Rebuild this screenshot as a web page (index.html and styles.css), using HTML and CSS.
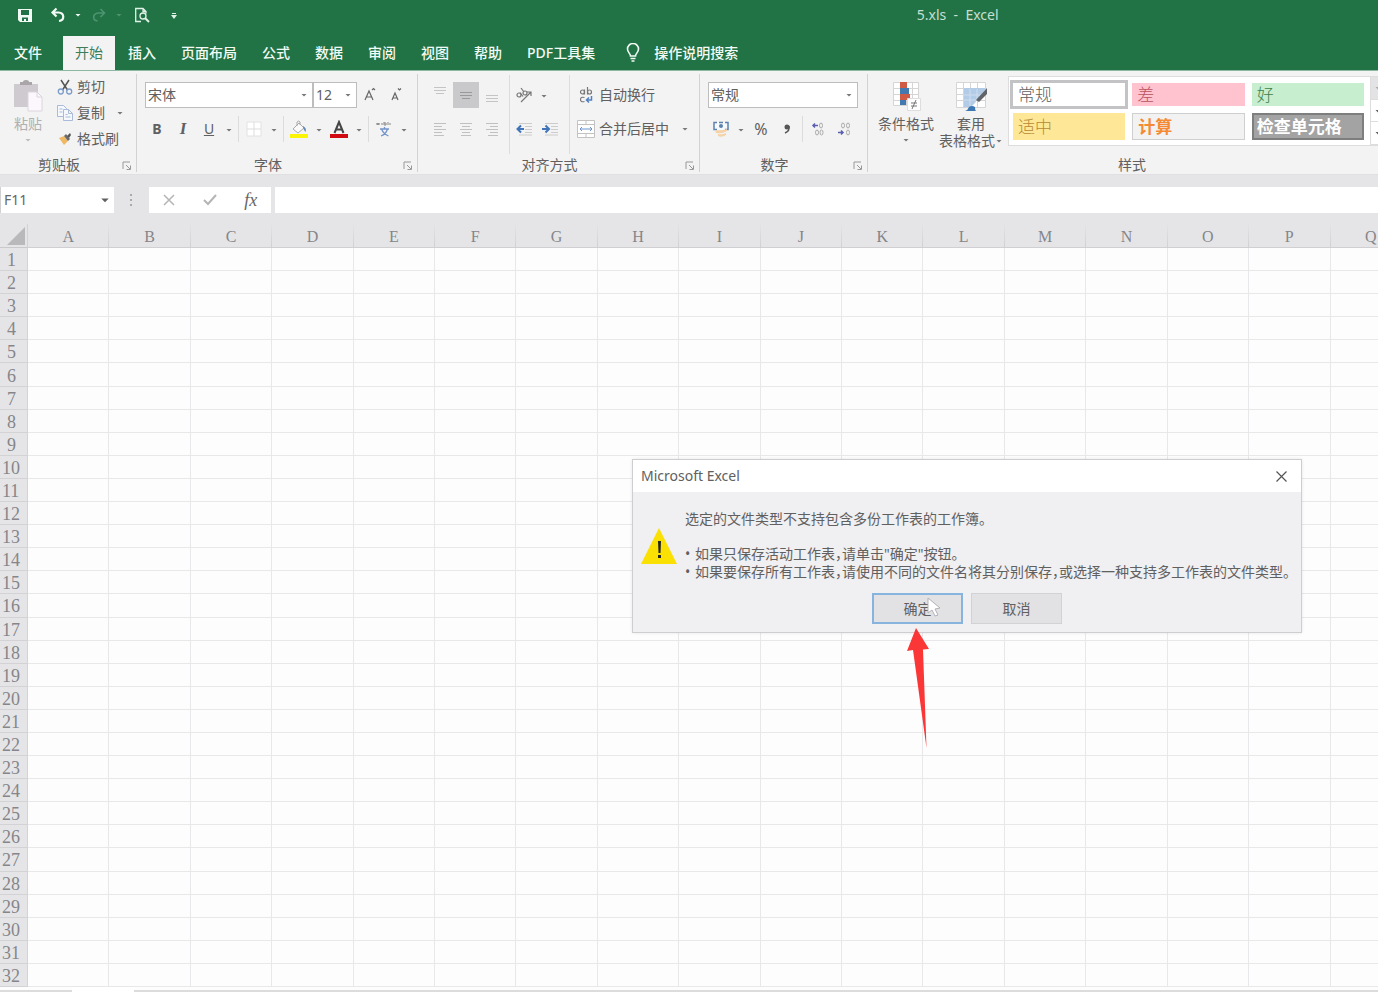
FILE: index.html
```html
<!DOCTYPE html>
<html lang="zh-CN">
<head>
<meta charset="utf-8">
<title>5.xls - Excel</title>
<link rel="stylesheet" href="styles.css">
</head>
<body>
<svg class="sprite" aria-hidden="true">
  <symbol id="caret" viewBox="0 0 8 8"><path d="M1.5 3h5L4 5.5z" fill="currentColor"/></symbol>
  <symbol id="launch" viewBox="0 0 10 10"><path d="M1 8V1h7M4 4l4 4M8.500 4.500v4h-4" fill="none" stroke="currentColor"/></symbol>
</svg>
<header class="top">
  <div class="titlebar">
    <div class="quick">
      <button class="q save" aria-label="保存"><svg width="16" height="16" viewBox="0 0 16 16"><path fill="#f2faf5" fill-rule="evenodd" d="M1 2h14v13H3l-2-2zM4 3v5h8V3zM5 10.500V14h2v-2h2v2h2v-3.500z"/></svg></button>
      <button class="q undo" aria-label="撤消"><svg width="16" height="16" viewBox="0 0 16 16" fill="none" stroke="#f2faf5" stroke-width="2.200"><path d="M6.500 1.500L2.500 5.500l4 4M3 5.500h5.500c6.500.5 6 8 .5 8.500"/></svg></button>
      <button class="q arrow" aria-label="撤消选项"><svg width="8" height="8"><use href="#caret"/></svg></button>
      <button class="q redo" aria-label="恢复"><svg width="16" height="16" viewBox="0 0 16 16" fill="none" stroke="#4d9470" stroke-width="1.600"><path d="M9.500 2L13.500 6l-4 4M13 6H7.500C1 6.500 1.500 13.500 6.500 14"/></svg></button>
      <button class="q arrow dim" aria-label="恢复选项"><svg width="8" height="8"><use href="#caret"/></svg></button>
      <button class="q preview" aria-label="打印预览"><svg width="16" height="16" viewBox="0 0 16 16" fill="none" stroke="#e2f1e8" stroke-width="1.300"><path d="M7 14.500H1.700V1.500H9l3 3v2M9 1.500v3h3"/><circle cx="9" cy="9" r="3"/><path d="M11 11l4 4" stroke-width="2"/></svg></button>
      <button class="q custom" aria-label="自定义快速访问工具栏"><svg width="8" height="10" viewBox="0 0 8 10" fill="#e2f1e8"><path d="M2 3h4v1H2zM1 5h6L4 9z"/></svg></button>
    </div>
    <h1 class="title">5.xls&nbsp; -&nbsp; Excel</h1>
  </div>
  <nav class="tabs">
    <button class="tab file">文件</button>
    <button class="tab active">开始</button>
    <button class="tab">插入</button>
    <button class="tab">页面布局</button>
    <button class="tab">公式</button>
    <button class="tab">数据</button>
    <button class="tab">审阅</button>
    <button class="tab">视图</button>
    <button class="tab">帮助</button>
    <button class="tab">PDF工具集</button>
    <button class="tab tell"><svg width="14" height="20" viewBox="0 0 14 20" fill="none" stroke="#f2faf5" stroke-width="1.600"><path d="M4.500 13c0-2.500-3-3.500-3-7a5.500 5.500 0 0 1 11 0c0 3.500-3 4.500-3 7z"/><path d="M4.500 15.500h5M5.500 18h3"/></svg>操作说明搜索</button>
  </nav>
</header>

<section class="ribbon" aria-label="功能区">
  <div class="group clipboard">
    <div class="body">
      <button class="big paste"><svg width="32" height="32" viewBox="0 0 32 32"><path d="M2 4h24v23H2z" fill="#cfcacf"/><path d="M8 5V2h3a3 2 0 0 1 6 0h3v3z" fill="#a9a5a9"/><path d="M16 12h9l5 5v14H16z" fill="#fbf7fc" stroke="#dcd5de"/><path d="M25 12v5h5" fill="none" stroke="#dcd5de"/></svg><span>粘贴</span><svg class="caret" width="8" height="8"><use href="#caret"/></svg></button>
      <div class="stack">
        <button class="small"><svg width="16" height="16" viewBox="0 0 16 16" fill="none"><path d="M4 1l6.500 10M12 1L5.500 11" stroke="#555" stroke-width="1.500"/><circle cx="3.800" cy="12.500" r="2.500" stroke="#7b9cc9" stroke-width="1.300"/><circle cx="12.200" cy="12.500" r="2.500" stroke="#7b9cc9" stroke-width="1.300"/></svg>剪切</button>
        <button class="small"><svg width="16" height="16" viewBox="0 0 16 16" fill="#f5f8fd" stroke="#a9bbd8"><path d="M.5.5h6l3 3v8h-9z"/><path d="M6.500 4.500h5l4 4v7h-9zM11.500 4.500v4h4M8.500 9.500h2M8.500 12h5M2.500 4h3M2.500 7h3"/></svg>复制<svg class="caret" width="8" height="8"><use href="#caret"/></svg></button>
        <button class="small"><svg width="16" height="16" viewBox="0 0 16 16"><path d="M2 7l5-2 4 5-4 4z" fill="#eeb864"/><path d="M7 5l2-2 4 5-2 2z" fill="#6a6a6a"/><path d="M10 5l3-3 1 2-2 3z" fill="#555"/></svg>格式刷</button>
      </div>
    </div>
    <div class="label"><span>剪贴板</span><button aria-label="剪贴板选项"><svg width="10" height="10"><use href="#launch"/></svg></button></div>
  </div>

  <div class="group font">
    <div class="body rows">
      <div class="row">
        <label class="combo name"><select aria-label="字体"><option>宋体</option></select><svg width="8" height="8"><use href="#caret"/></svg></label><label class="combo size"><select aria-label="字号"><option>12</option></select><svg width="8" height="8"><use href="#caret"/></svg></label>
        <button class="ico" aria-label="增大字号"><svg width="14" height="16" viewBox="0 0 14 16" fill="none" stroke="#666" stroke-width="1.200"><path d="M2 13L6 4l4 9M3.500 10h5"/><path d="M9 3l1.500-1.500L12 3"/></svg></button>
        <button class="ico" aria-label="减小字号"><svg width="14" height="16" viewBox="0 0 14 16" fill="none" stroke="#666" stroke-width="1.200"><path d="M3 13l3-7 3 7M4 11h4"/><path d="M9 1.500L10.500 3 12 1.500"/></svg></button>
      </div>
      <div class="row">
        <button class="ico b">B</button><button class="ico i">I</button><button class="ico u">U</button><button class="drop" aria-label="下划线选项"><svg width="8" height="8"><use href="#caret"/></svg></button>
        <span class="sep"></span>
        <button class="ico" aria-label="边框"><svg width="16" height="16" viewBox="0 0 16 16"><path d="M1 1h14v14H1z" fill="#fff" stroke="#e2e2e2"/><path d="M8 1v14M1 8h14" stroke="#ddd"/></svg></button><button class="drop" aria-label="边框选项"><svg width="8" height="8"><use href="#caret"/></svg></button>
        <span class="sep"></span>
        <button class="ico" aria-label="填充颜色"><svg width="18" height="18" viewBox="0 0 18 18"><path d="M3 9l6-6 5 5-6 5z" fill="#fafafa" stroke="#aaa"/><path d="M7 6V2q1.500-2 3 0v3" fill="none" stroke="#aaa"/><path d="M13 6q4 2 2.500 6Q14 11 13 7z" fill="#5f87b5"/><path d="M0 14h18v4H0z" fill="#fbf406"/></svg></button><button class="drop" aria-label="填充选项"><svg width="8" height="8"><use href="#caret"/></svg></button>
        <button class="ico" aria-label="字体颜色"><svg width="18" height="18" viewBox="0 0 18 18"><path d="M4.500 13L9 2l4.500 11M6 9.500h6" fill="none" stroke="#444" stroke-width="2"/><path d="M0 14h18v4H0z" fill="#d10a12"/></svg></button><button class="drop" aria-label="颜色选项"><svg width="8" height="8"><use href="#caret"/></svg></button>
        <span class="sep"></span>
        <button class="ico" aria-label="拼音指南"><svg width="16" height="16" viewBox="0 0 16 16" fill="none"><path d="M1 4V2l1 2 1-2v2M6 4V2M8 1v3h2V2H8M12 1v3M14 2v2" stroke="#888"/><path d="M4 8h9M8.500 6v2M5 15q5-2 6.500-7M5.500 8q2 5 7 7" stroke="#7394cb" stroke-width="1.300"/></svg></button><button class="drop" aria-label="拼音选项"><svg width="8" height="8"><use href="#caret"/></svg></button>
      </div>
    </div>
    <div class="label"><span>字体</span><button aria-label="字体设置"><svg width="10" height="10"><use href="#launch"/></svg></button></div>
  </div>

  <div class="group align">
    <div class="body">
      <div class="rows">
        <div class="row">
          <button class="ico" aria-label="顶端对齐"><svg width="14" height="16" viewBox="0 0 14 16" stroke="#c4c4c4"><path d="M1 .5h12M1 3.500h12M3 6.500h8"/></svg></button><button class="ico on" aria-label="垂直居中"><svg width="14" height="16" viewBox="0 0 14 16" stroke="#999"><path d="M1 5.500h12M1 8.500h12M3 11.500h8"/></svg></button><button class="ico" aria-label="底端对齐"><svg width="14" height="16" viewBox="0 0 14 16" stroke="#c4c4c4"><path d="M1 8.500h12M1 11.500h12M1 14.500h12"/></svg></button>
        </div>
        <div class="row">
          <button class="ico" aria-label="左对齐"><svg width="14" height="14" viewBox="0 0 14 14" stroke="#c0c0c0"><path d="M1 1.500h12M1 4.500h8M1 7.500h12M1 10.500h8M1 13.500h10"/></svg></button><button class="ico" aria-label="居中"><svg width="14" height="14" viewBox="0 0 14 14" stroke="#c0c0c0"><path d="M1 1.500h12M3 4.500h8M1 7.500h12M3 10.500h8M2 13.500h10"/></svg></button><button class="ico" aria-label="右对齐"><svg width="14" height="14" viewBox="0 0 14 14" stroke="#c0c0c0"><path d="M1 1.500h12M5 4.500h8M1 7.500h12M5 10.500h8M3 13.500h10"/></svg></button>
        </div>
      </div>
      <div class="rows mid">
        <div class="row">
          <button class="ico" aria-label="方向"><svg width="18" height="16" viewBox="0 0 18 16" fill="none" stroke="#777" stroke-width="1.200"><path d="M6 15L16 5M16 9V5h-4"/><circle cx="4" cy="8" r="2"/><path d="M5 5.500l3 4"/><circle cx="10" cy="6" r="2"/><path d="M6 1l3 4"/></svg></button><button class="drop" aria-label="方向选项"><svg width="8" height="8"><use href="#caret"/></svg></button>
        </div>
        <div class="row">
          <button class="ico" aria-label="减少缩进"><svg width="16" height="14" viewBox="0 0 16 14"><path d="M3 1.500h13M9 4.500h7M9 7.500h7M9 10.500h7M3 13h13" stroke="#ccc"/><path d="M8 7H2M5 3.500L1.500 7 5 10.500" fill="none" stroke="#3f74b8" stroke-width="2"/></svg></button><button class="ico" aria-label="增加缩进"><svg width="16" height="14" viewBox="0 0 16 14"><path d="M3 1.500h13M9 4.500h7M9 7.500h7M9 10.500h7M3 13h13" stroke="#ccc"/><path d="M0 7h6M3.500 3.500L7 7l-3.500 3.500" fill="none" stroke="#3f74b8" stroke-width="2"/></svg></button>
        </div>
      </div>
      <div class="rows wrap">
        <div class="row"><button class="small"><svg width="18" height="18" viewBox="0 0 18 18" fill="none" stroke="#777" stroke-width="1.200"><circle cx="5.500" cy="6" r="2"/><path d="M7.500 3.500v5M10.500 1v7.500"/><circle cx="12.500" cy="6" r="2"/><path d="M7.500 11.500q-4-1-4 2t4 2"/><path d="M14.500 10v4H10M12 11.500L9.500 14l2.500 2.500" stroke="#4f80c4" stroke-width="1.500"/></svg>自动换行</button></div>
        <div class="row"><button class="small"><svg width="18" height="18" viewBox="0 0 18 18" fill="#fff" stroke="#c2c2c2"><path d="M.5.5h17v17H.5zM.5 4.500h17M.5 13.500h17M9 .5v4M9 13.500v4"/><path d="M3 9h12M5 7L3 9l2 2M13 7l2 2-2 2" fill="none" stroke="#6d95ca"/></svg>合并后居中<svg class="caret" width="8" height="8"><use href="#caret"/></svg></button></div>
      </div>
    </div>
    <div class="label"><span>对齐方式</span><button aria-label="对齐设置"><svg width="10" height="10"><use href="#launch"/></svg></button></div>
  </div>

  <div class="group number">
    <div class="body rows">
      <div class="row"><label class="combo format"><select aria-label="数字格式"><option>常规</option></select><svg width="8" height="8"><use href="#caret"/></svg></label></div>
      <div class="row">
        <button class="ico" aria-label="会计数字格式"><svg width="18" height="18" viewBox="0 0 18 18"><path d="M2 2.500h14v8H2z" fill="#f7fafc"/><path d="M5 2.500H2v7h3M13 2.500h3v7h-3M7 2.500h4" fill="none" stroke="#5b83ae" stroke-width="1.500"/><circle cx="9" cy="6" r="2" fill="#5b83ae"/><path d="M3 10q6 1 12-1v2q-5 3-11 2zM6 14q4 1 8-1v2q-4 3-8 1z" fill="#f5d2a8"/></svg></button><button class="drop" aria-label="会计选项"><svg width="8" height="8"><use href="#caret"/></svg></button><button class="ico pct">%</button><button class="ico" aria-label="千位分隔样式"><svg width="8" height="10" viewBox="0 0 8 10"><circle cx="4" cy="3" r="2.500" fill="#555"/><path d="M6 2q1 5-4 7" fill="none" stroke="#555" stroke-width="1.500"/></svg></button>
        <span class="sep"></span>
        <button class="ico" aria-label="增加小数位数"><svg width="14" height="14" viewBox="0 0 14 14" fill="none" stroke="#aaa"><path d="M7 3.500H2M4 1.500l-2 2 2 2" stroke="#5a5fb0" stroke-width="1.500"/><ellipse cx="10" cy="3.500" rx="1.500" ry="2.500"/><ellipse cx="6" cy="10.500" rx="1.500" ry="2.500"/><ellipse cx="10.500" cy="10.500" rx="1.500" ry="2.500"/></svg></button><button class="ico" aria-label="减少小数位数"><svg width="14" height="14" viewBox="0 0 14 14" fill="none" stroke="#aaa"><path d="M1 10.500h5M4 8.500l2 2-2 2" stroke="#5a5fb0" stroke-width="1.500"/><ellipse cx="6" cy="3.500" rx="1.500" ry="2.500"/><ellipse cx="11" cy="3.500" rx="1.500" ry="2.500"/><ellipse cx="11" cy="10.500" rx="1.500" ry="2.500"/></svg></button>
      </div>
    </div>
    <div class="label"><span>数字</span><button aria-label="数字设置"><svg width="10" height="10"><use href="#launch"/></svg></button></div>
  </div>

  <div class="group styles">
    <div class="body">
      <button class="big cond"><svg width="32" height="32" viewBox="0 0 32 32"><path d="M3.500 2.500h25v23h-25zM3.500 8.500h25M3.500 14.500h25M3.500 20.500h25M10.500 2.500v23M16.500 2.500v23M22.500 2.500v23" fill="#fff" stroke="#d5d5d5"/><path d="M10 2h7v6h-7zM10 14h10v6H10z" fill="#cf5a45"/><path d="M10 8h9v6h-9zM10 20h6v5h-6z" fill="#4179b0"/><path d="M17.500 18.500h13v12h-13z" fill="#fff" stroke="#ddd"/><path d="M21 23h6M21 26h6M26 20l-4 9" stroke="#777"/></svg><span>条件格式</span><svg class="caret" width="8" height="8"><use href="#caret"/></svg></button>
      <button class="big tbl"><svg width="32" height="32" viewBox="0 0 32 32"><path d="M1.500 2.500h29v25h-29zM1.500 8.500h29M1.500 14.500h29M1.500 20.500h29M8.500 2.500v25M15.500 2.500v25M22.500 2.500v25" fill="#fff" stroke="#d5d5d5"/><path d="M9 8h21v2L19 24l-3 3H9z" fill="#b2cbe6"/><path d="M15 9v17M22 9v10M9 15h17M9 20h13" stroke="#cfdeef"/><path d="M32 8v6l-8 8-3-2z" fill="#606468"/><path d="M10 31q3-1 4-4 3-2 6 0 0 3 1 4z" fill="#3c78b4"/></svg><span>套用</span><span>表格格式<svg class="caret" width="8" height="8"><use href="#caret"/></svg></span></button>
      <div class="gallery">
        <button class="st normal">常规</button><button class="st bad">差</button><button class="st good">好</button>
        <button class="st neutral">适中</button><button class="st calc">计算</button><button class="st check">检查单元格</button>
      </div>
      <div class="scroll">
        <button aria-label="上一行"><svg width="8" height="8"><use href="#caret"/></svg></button>
        <button aria-label="下一行"><svg width="8" height="8"><use href="#caret"/></svg></button>
        <button aria-label="其他"><svg width="8" height="8"><use href="#caret"/></svg></button>
      </div>
    </div>
    <div class="label"><span>样式</span></div>
  </div>
</section>

<section class="formula">
  <label class="cellname"><input value="F11" aria-label="名称框"><svg width="12" height="12"><use href="#caret"/></svg></label>
  <svg class="dots" width="4" height="14" viewBox="0 0 4 14" fill="#aaa"><path d="M1 1h2v2H1zM1 6h2v2H1zM1 11h2v2H1z"/></svg>
  <div class="fx">
    <button aria-label="取消输入"><svg width="12" height="12" viewBox="0 0 12 12" stroke="#b5b5b5" stroke-width="1.500"><path d="M1 1l10 10M11 1L1 11"/></svg></button>
    <button aria-label="输入"><svg width="14" height="12" viewBox="0 0 14 12" fill="none" stroke="#b5b5b5" stroke-width="2"><path d="M1 6l4 4 8-9"/></svg></button>
    <button class="fn">fx</button>
  </div>
  <input class="entry" aria-label="编辑栏">
</section>

<main class="sheet">
  <table class="grid">
    <thead><tr id="cols"><th class="corner"><svg width="18" height="18" viewBox="0 0 18 18"><path d="M18 0v18H0z" fill="#b9b9bb"/></svg></th></tr></thead>
    <tbody id="rows"></tbody>
  </table>
</main>
<footer class="sheetbar"><span></span></footer>

<dialog class="msg" open aria-labelledby="msg-title">
  <div class="msg-head"><h2 id="msg-title">Microsoft Excel</h2><button aria-label="关闭"><svg width="11" height="11" viewBox="0 0 11 11" stroke="#555" stroke-width="1.200"><path d="M.5.5l10 10M10.500.5l-10 10"/></svg></button></div>
  <div class="msg-body">
    <svg width="36" height="36" viewBox="0 0 36 36"><path d="M18 0l18 36H0z" fill="#fbe003"/><path d="M17 13h3l-.5 12h-2zM17 27h3v3h-3z" fill="#222"/></svg>
    <div class="msg-text">
      <p>选定的文件类型不支持包含多份工作表的工作簿。</p>
      <ul>
        <li>如果只保存活动工作表，请单击"确定"按钮。</li>
        <li>如果要保存所有工作表，请使用不同的文件名将其分别保存，或选择一种支持多工作表的文件类型。</li>
      </ul>
    </div>
  </div>
  <div class="msg-actions"><button class="ok">确定</button><button>取消</button></div>
</dialog>
<svg class="cursor" width="16" height="22" viewBox="0 0 16 22"><path d="M1 1v15l4-3 3 6 3-1-3-6 5-1z" fill="#fff" stroke="#b3b1b8"/></svg>
<svg class="pointer" width="24" height="122" viewBox="0 0 24 122"><path d="M10 1l13 21-6 .5L20.500 121 7 23l-6 1z" fill="#fb3636"/></svg>
<script src="sheet.js"></script>
</body>
</html>
```

FILE: styles.css
```css
* { box-sizing: border-box; }
body {
  margin: 0; height: 100vh; overflow: hidden;
  display: flex; flex-direction: column;
  background: #fdfdfd; color: #606060;
  font: 14px/18px "Noto Sans", "Noto Sans CJK SC", sans-serif;
}
button, input, select { font: inherit; color: inherit; border: 0; padding: 0; margin: 0; background: none; border-radius: 0; }
button { display: flex; align-items: center; justify-content: center; white-space: nowrap; }
svg { flex: none; display: block; }
h1, h2, p, ul { margin: 0; padding: 0; font-size: 14px; font-weight: 400; }
.sprite { position: absolute; width: 0; height: 0; }

.top { background: #217346; color: #f2faf5; border-bottom: 1px solid #8db9a0; }
.titlebar { display: grid; grid-template-columns: 39% 61%; height: 36px; padding-bottom: 6px; align-items: center; }
.quick { display: flex; align-items: center; padding-left: 12px; }
.q { width: 26px; height: 26px; }
.q.undo { margin-left: 7px; }
.q.arrow { width: 14px; }
.q.redo { margin-left: 1px; }
.q.dim { color: #4d9470; }
.q.preview { margin-left: 3px; }
.q.custom { margin-left: 6px; }
.title { text-align: center; color: #c6dfd0; }
.tabs { display: flex; gap: 1px; }
.tab { height: 34px; padding: 0 12px 1px; font-weight: 500; }
.tab.file { padding: 0 20px 1px 14px; }
.tab.active { background: #f3f3f3; color: #3d7d5b; font-weight: 400; }
.tab.tell { gap: 14px; padding-left: 18px; }

.ribbon { display: flex; height: 104px; background: #f3f3f3; border-bottom: 1px solid #e0e0e2; }
.group { flex: none; display: flex; flex-direction: column; position: relative; padding-top: 4px; border-right: 1px solid #d2d2d2; border-image: linear-gradient(to bottom, transparent 4px, #d2d2d2 4px, #d2d2d2 100px, transparent 100px) 1; }
.clipboard { width: 137px; }
.font { width: 281px; }
.align { width: 282px; }
.number { width: 168px; }
.styles { width: 528px; border: 0; }
.body { display: flex; height: 80px; }
.label { display: flex; height: 20px; line-height: 22px; }
.label span { flex: 1; text-align: center; }
.label button { width: 18px; padding-top: 3px; color: #999; }
.caret { color: #777; }
.big { flex-direction: column; justify-content: flex-start; padding-top: 5px; }
.big > svg:first-child { margin-bottom: 3px; }
.big span { display: flex; align-items: center; height: 17px; line-height: 17px; }
.big > .caret { margin-top: 4px; }
.paste { width: 56px; color: #b0b0b0; }
.paste .caret { color: #bbb; }
.small { height: 26px; gap: 4px; justify-content: flex-start; }
.stack { padding-left: 1px; }
.stack .small { padding-bottom: 3px; }
.stack .small .caret { margin-left: 7px; }

.rows { display: flex; flex-direction: column; gap: 8px; padding-top: 7px; }
.row { display: flex; height: 26px; }
.body.rows { padding-left: 8px; }
.font .body.rows { padding-left: 7px; }
.ico { width: 26px; height: 26px; }
.ico.on { background: #c9c9cb; }
.drop { width: 14px; padding-top: 1px; color: #777; }
.sep { width: 1px; margin: 0 2px; background: #dcdcdc; }
.b { font-weight: 700; }
.i { font-style: italic; font-weight: 700; font-family: "Liberation Serif", serif; font-size: 17px; }
.u { text-decoration: underline; }
.pct { font-size: 16px; }
.combo { display: grid; grid-template-columns: 1fr 14px; align-items: center; height: 26px; background: #fff; border: 1px solid #bdbdbd; }
.combo select { grid-area: 1 / 1 / 2 / 3; appearance: none; padding-left: 2px; height: 24px; outline: 0; }
.combo svg { grid-area: 1 / 2; margin-left: 2px; color: #777; pointer-events: none; }
.name { width: 168px; margin-left: 1px; }
.size { width: 44px; }
.format { width: 150px; }
.align .body { padding-left: 9px; }
.mid { width: 61px; margin-left: 4px; border-left: 1px solid #dcdcdc; padding-left: 1px; }
.wrap { border-left: 1px solid #dcdcdc; padding-left: 7px; margin-left: -1px; }
.wrap .caret { margin-left: 8px; }
.cond { width: 56px; margin-left: 10px; }
.tbl { width: 64px; margin: 0 5px; }
.gallery { flex: 1; height: 70px; margin-top: 1px; padding: 6px 6px 5px 4px; display: grid; grid-template-columns: repeat(3, 1fr); gap: 7px; background: #fff; border: 1px solid #ddd; }
.st { justify-content: flex-start; padding-left: 5px; font-size: 17px; line-height: 20px; }
.normal { outline: 3px solid #c3c3c5; font-weight: 300; }
.bad { background: #fec3ce; color: #b8525f; font-weight: 300; }
.good { background: #c7eecf; color: #3f7f4c; font-weight: 300; }
.neutral { background: #fee897; color: #b58a35; font-weight: 300; }
.calc { background: #f2f2f2; border: 1px solid #cfcfcf; color: #f58a35; font-weight: 700; }
.check { background: #a3a3a3; border: 2px solid #7e7e7e; color: #fff; font-weight: 700; padding-left: 3px; }
.scroll { width: 25px; height: 70px; margin-top: 1px; display: flex; flex-direction: column; border: 1px solid #ddd; border-left: 0; background: #fff; }
.scroll button { flex: 1; justify-content: flex-start; padding-left: 3px; border-bottom: 1px solid #ddd; }
.scroll button:first-child { background: #e3e3e6; color: #aaa; }

.formula { display: flex; align-items: center; height: 49px; padding: 12px 0; background: #e5e5e7; }
.cellname { display: flex; align-items: center; width: 114px; height: 26px; background: #fff; border-left: 1px solid #d0d0d0; padding: 0 3px; }
.cellname input { flex: 1; min-width: 0; color: #666; }
.dots { margin: 0 16px 0 15px; }
.fx { display: flex; width: 122px; height: 26px; background: #fff; }
.fx button { flex: 1; }
.fx .fn { font: italic 18px/20px "Liberation Serif", serif; color: #666; }
.entry { flex: 1; height: 26px; margin-left: 4px; background: #fff; }

.sheet { flex: 1; min-height: 0; overflow: hidden; }
.grid { width: calc(100% + 34px); height: 100%; table-layout: fixed; border-collapse: separate; border-spacing: 0; }
.grid th { padding: 0; font: 18px/20px "Liberation Serif", serif; color: #85858a; background: #e5e5e7; }
.grid thead th { height: 24px; border-right: 1px solid #d3d3d6; border-bottom: 1px solid #c9c9cc; padding-top: 3px; }
.grid thead th:not(.corner) { font-size: 16px; border-image: linear-gradient(to bottom, #e5e5e7, #cfcfd2) 1; }
.grid .corner { width: 28px; padding: 0 2px 0 0; }
.corner svg { margin-left: auto; }
.grid tbody th { text-align: left; padding: 2px 0 0 2px; border-bottom: 1px solid #d3d3d6; border-right: 1px solid #d3d3d6; }
.grid tbody th.one { padding-left: 7px; }
.grid td { padding: 0; border-right: 1px solid #e8e8eb; border-bottom: 1px solid #e8e8eb; }
.sheetbar { display: flex; flex: none; height: 5px; padding: 0 0 0 72px; background: linear-gradient(#fdfdfd 3px, #dcdcdc 3px); }
.sheetbar span { width: 62px; background: #fff; }

.msg { position: absolute; left: 632px; top: 459px; width: 670px; margin: 0; padding: 0; border: 1px solid #cfcdd2; background: #f0eff1; color: #606060; box-shadow: 0 0 3px #00000018; }
.msg-head { display: flex; align-items: center; justify-content: space-between; height: 32px; padding: 0 14px 0 8px; background: #fff; }
.msg-body { display: grid; grid-template-columns: 36px 1fr; gap: 8px; align-items: center; padding: 18px 8px 12px; }
.msg-text { white-space: nowrap; font-feature-settings: "halt"; }
.msg-text ul { list-style: none; margin-top: 17px; }
.msg-text li::before { content: "•"; display: inline-block; width: 10px; }
.msg-actions { display: flex; justify-content: center; gap: 8px; padding-bottom: 8px; }
.msg-actions button { width: 91px; height: 31px; background: #e2e1e3; border: 1px solid #d2d1d4; }
.msg-actions .ok { border: 2px solid #86b4df; }
.cursor { position: absolute; left: 927px; top: 597px; }
.pointer { position: absolute; left: 906px; top: 627px; }
```

FILE: sheet.js
```js
const letters = "ABCDEFGHIJKLMNOPQ";
const cols = document.getElementById("cols");
for (const letter of letters) {
  const th = document.createElement("th");
  th.scope = "col";
  th.textContent = letter;
  cols.append(th);
}
const rows = document.getElementById("rows");
for (let n = 1; n <= 32; n++) {
  const tr = rows.insertRow();
  const th = document.createElement("th");
  th.scope = "row";
  th.textContent = n;
  if (n < 10) th.className = "one";
  tr.append(th);
  for (let c = 0; c < letters.length; c++) tr.insertCell();
}
```
